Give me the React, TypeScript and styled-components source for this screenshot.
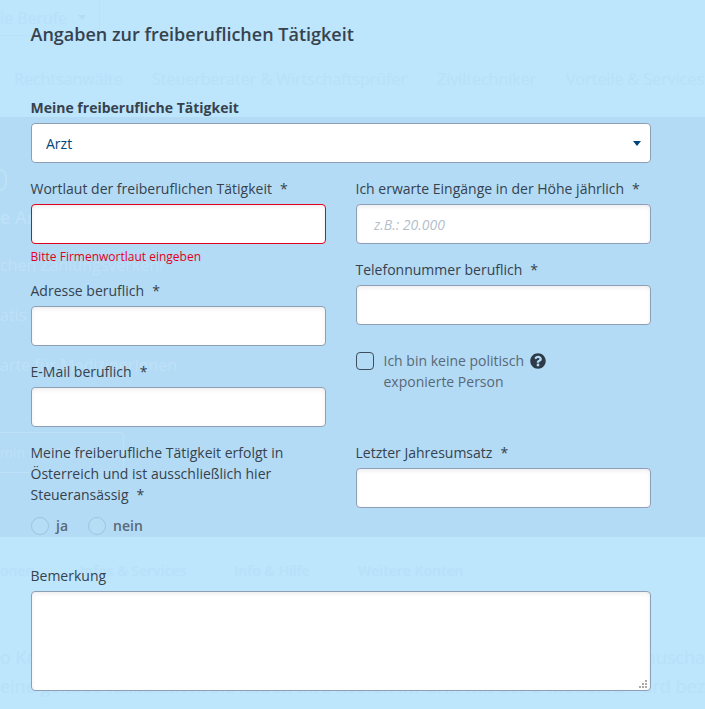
import React from "react"
import styled, { createGlobalStyle } from "styled-components"
import { FaQuestionCircle } from "react-icons/fa"

const GlobalStyle = createGlobalStyle`
    html, body {
        margin: 0;
        padding: 0;
        font-family: "Open Sans", "Liberation Sans", sans-serif;
    }
`

const App: React.FC = (): JSX.Element => {
    return (
        <Page>
            <GlobalStyle />

            <Backdrop>
                <TopBand>
                    <DropdownGhost>ie Berufe <GhostCaret /></DropdownGhost>
                    <GhostTabs>
                        <GhostTab $width={138}>Rechtsanwälte</GhostTab>
                        <GhostTab $width={285}>Steuerberater &amp; Wirtschaftsprüfer</GhostTab>
                        <GhostTab $width={129}>Ziviltechniker</GhostTab>
                        <GhostTab>Vorteile &amp; Services</GhostTab>
                    </GhostTabs>
                </TopBand>
                <MiddleBand>
                    <GhostBadge />
                    <GhostHeading>e Ar</GhostHeading>
                    <GhostLine>chen Zahlungsverkehr</GhostLine>
                    <GhostLine>atis</GhostLine>
                    <GhostLine>arte für MedizinerInnen</GhostLine>
                    <GhostButton>min vereinbaren</GhostButton>
                </MiddleBand>
                <BottomBand>
                    <BottomTabs>
                        <BottomTab $width={80}>onen</BottomTab>
                        <BottomTab $width={154}>Infos &amp; Services</BottomTab>
                        <BottomTab $width={124}>Info &amp; Hilfe</BottomTab>
                        <BottomTab>Weitere Konten</BottomTab>
                    </BottomTabs>
                    <GhostRow>
                        <span>o Konto</span>
                        <span>auscha</span>
                    </GhostRow>
                    <GhostRow>
                        <span>eine genaue Kalkulation. Sie haben Ihre Kosten im Griff mit der e-MedCard</span>
                        <span>ard bez</span>
                    </GhostRow>
                </BottomBand>
            </Backdrop>

            <Form>
                <Title>Angaben zur freiberuflichen Tätigkeit</Title>

                <StrongLabel>Meine freiberufliche Tätigkeit</StrongLabel>
                <SelectWrap>
                    <Select defaultValue="Arzt">
                        <option>Arzt</option>
                        <option>Zahnarzt</option>
                    </Select>
                </SelectWrap>

                <Columns>
                    <Column>
                        <Label>Wortlaut der freiberuflichen Tätigkeit<Star>*</Star></Label>
                        <Input $error />
                        <ErrorText>Bitte Firmenwortlaut eingeben</ErrorText>
                        <Label $top={16}>Adresse beruflich<Star>*</Star></Label>
                        <Input />
                        <Label $top={16}>E-Mail beruflich<Star>*</Star></Label>
                        <Input />
                        <LongLabel>
                            Meine freiberufliche Tätigkeit erfolgt in<br />
                            Österreich und ist ausschließlich hier<br />
                            Steueransässig<Star>*</Star>
                        </LongLabel>
                        <RadioRow>
                            <RadioOption><Radio />ja</RadioOption>
                            <RadioOption><Radio />nein</RadioOption>
                        </RadioRow>
                    </Column>
                    <Column>
                        <Label>Ich erwarte Eingänge in der Höhe jährlich<Star>*</Star></Label>
                        <Input placeholder="z.B.: 20.000" />
                        <Label $top={16}>Telefonnummer beruflich<Star>*</Star></Label>
                        <Input />
                        <CheckRow>
                            <Checkbox />
                            <CheckText>
                                Ich bin keine politisch <HelpIcon /><br />
                                exponierte Person
                            </CheckText>
                        </CheckRow>
                        <Label $top={51}>Letzter Jahresumsatz<Star>*</Star></Label>
                        <Input />
                    </Column>
                </Columns>

                <RemarkLabel>Bemerkung</RemarkLabel>
                <TextAreaWrap>
                    <TextArea />
                    <ResizeGrip viewBox="0 0 9 9">
                        <rect x="6" y="0" width="2" height="2" />
                        <rect x="3" y="3" width="2" height="2" />
                        <rect x="6" y="3" width="2" height="2" />
                        <rect x="0" y="6" width="2" height="2" />
                        <rect x="3" y="6" width="2" height="2" />
                        <rect x="6" y="6" width="2" height="2" />
                    </ResizeGrip>
                </TextAreaWrap>
            </Form>
        </Page>
    )
}

export default App

const Page = styled.div`
    position: relative;
    width: 705px;
    height: 709px;
    overflow: hidden;
    color: #36424e;
    font-size: 14px;
`

const Backdrop = styled.div`
    display: flex;
    flex-direction: column;
    height: 709px;
`

const TopBand = styled.div`
    height: 117px;
    background: #bde5fc;
    color: #b8e0f9;
    font-size: 16px;
    box-sizing: border-box;
`

const DropdownGhost = styled.div`
    display: flex;
    align-items: center;
    gap: 11px;
    width: 99px;
    height: 35px;
    border-right: 1px solid #b9e1f9;
    border-bottom: 1px solid #b9e1f9;
`

const GhostCaret = styled.i`
    width: 0;
    height: 0;
    border-left: 4px solid transparent;
    border-right: 4px solid transparent;
    border-top: 5px solid #b3dbf5;
`

const GhostTabs = styled.div`
    display: flex;
    padding: 32px 0 0 14px;
    white-space: nowrap;
`

const GhostTab = styled.span<{$width?: number}>`
    ${props => props.$width ? `width: ${props.$width}px;` : ""}
    flex: none;
    line-height: 22px;
`

const MiddleBand = styled.div`
    height: 420px;
    background: #b3dbf5;
    color: #bee1f8;
    font-size: 16px;
    box-sizing: border-box;
    padding-top: 52px;
`

const GhostBadge = styled.div`
    width: 5px;
    height: 18px;
    border: 2px solid #bee1f8;
    border-left: 0;
    border-radius: 0 9px 9px 0;
`

const GhostHeading = styled.div`
    margin-top: 14px;
    font-size: 18px;
    font-weight: 600;
    line-height: 24px;
`

const GhostLine = styled.div`
    margin-top: 22px;
    line-height: 28px;
    white-space: nowrap;
`

const GhostButton = styled.div`
    width: 123px;
    height: 39px;
    margin-top: 53px;
    border: 1px solid #bee1f8;
    border-left: 0;
    border-radius: 0 4px 4px 0;
    font-size: 14px;
    line-height: 39px;
    white-space: nowrap;
    overflow: hidden;
`

const BottomBand = styled.div`
    flex: 1;
    background: #bde5fc;
    color: #b8e0f9;
    overflow: hidden;
`

const BottomTabs = styled.div`
    display: flex;
    padding-top: 24px;
    font-size: 14px;
    font-weight: 600;
    line-height: 20px;
    white-space: nowrap;
`

const BottomTab = styled.span<{$width?: number}>`
    ${props => props.$width ? `width: ${props.$width}px;` : ""}
    flex: none;
`

const GhostRow = styled.div`
    display: flex;
    justify-content: space-between;
    margin-top: 62px;
    font-size: 18px;
    line-height: 28px;
    white-space: nowrap;
    & + & {
        margin-top: 1px;
    }
`

const Form = styled.form`
    position: absolute;
    top: 0;
    left: 31px;
    width: 620px;
`

const Title = styled.h2`
    margin: 22px 0 0 -0.5px;
    font-size: 18px;
    font-weight: 600;
    line-height: 24px;
    color: #36424e;
`

const StrongLabel = styled.label`
    display: block;
    margin: 52px 0 5px -0.5px;
    font-size: 14px;
    font-weight: 700;
    line-height: 20px;
`

const SelectWrap = styled.div`
    position: relative;
    &::after {
        content: "";
        position: absolute;
        top: 18px;
        right: 10px;
        border-left: 4.5px solid transparent;
        border-right: 4.5px solid transparent;
        border-top: 5.5px solid #00457c;
        pointer-events: none;
    }
`

const Select = styled.select`
    display: block;
    width: 100%;
    height: 40px;
    padding: 0 14px;
    box-sizing: border-box;
    appearance: none;
    background: #fff;
    border: 1px solid #8e9eb4;
    border-radius: 4px;
    color: #00457c;
    font: 14px "Open Sans", sans-serif;
`

const Columns = styled.div`
    display: grid;
    grid-template-columns: 295px 295px;
    column-gap: 30px;
    margin-top: 16px;
`

const Column = styled.div`
    display: flex;
    flex-direction: column;
`

const Label = styled.label<{$top?: number}>`
    display: block;
    margin: ${props => props.$top ?? 0}px 0 5px -0.5px;
    line-height: 20px;
`

const Star = styled.span`
    margin-left: 8px;
`

const Input = styled.input<{$error?: boolean}>`
    display: block;
    width: 100%;
    height: 40px;
    padding: 0 17px;
    box-sizing: border-box;
    background: #fff;
    border: 1px solid ${props => props.$error ? "#e2001a" : "#8e9eb4"};
    border-radius: 4px;
    box-shadow: inset 0 2px 4px rgba(0, 0, 0, 0.07);
    outline: none;
    font: 14px "Open Sans", sans-serif;
    &::placeholder {
        color: #b4bfcc;
        font-style: italic;
        opacity: 1;
    }
`

const ErrorText = styled.div`
    margin-top: 5px;
    margin-left: -0.5px;
    color: #e2001a;
    font-size: 12px;
    line-height: 16px;
`

const LongLabel = styled.div`
    margin-top: 15px;
    margin-left: -0.5px;
    line-height: 21px;
`

const RadioRow = styled.div`
    display: flex;
    gap: 20px;
    margin-top: 11px;
`

const RadioOption = styled.label`
    display: flex;
    align-items: center;
    gap: 7px;
    color: #5a6876;
    font-weight: 600;
    line-height: 20px;
`

const Radio = styled.span`
    width: 16px;
    height: 16px;
    border: 1px solid #9fc4de;
    border-radius: 50%;
    background: #b6ddf6;
`

const CheckRow = styled.div`
    display: flex;
    gap: 9.5px;
    margin-top: 27px;
    align-items: flex-start;
`

const Checkbox = styled.span`
    flex: none;
    width: 16px;
    height: 16px;
    border: 1px solid #3f4e5e;
    border-radius: 4px;
`

const CheckText = styled.div`
    margin-top: -2px;
    color: #5a6876;
    line-height: 21px;
`

const HelpIcon = styled(FaQuestionCircle)`
    width: 16px;
    height: 16px;
    margin-left: 2px;
    vertical-align: -2.5px;
    color: #2e3a47;
`

const RemarkLabel = styled.label`
    display: block;
    margin: 30px 0 5px -0.5px;
    line-height: 20px;
`

const TextAreaWrap = styled.div`
    position: relative;
`

const TextArea = styled.textarea`
    display: block;
    width: 100%;
    height: 100px;
    box-sizing: border-box;
    background: #fff;
    border: 1px solid #8e9eb4;
    border-radius: 4px;
    box-shadow: inset 0 2px 4px rgba(0, 0, 0, 0.07);
    outline: none;
    resize: none;
`

const ResizeGrip = styled.svg`
    position: absolute;
    right: 3px;
    bottom: 2px;
    width: 9px;
    height: 9px;
    fill: #a9a9a9;
`
